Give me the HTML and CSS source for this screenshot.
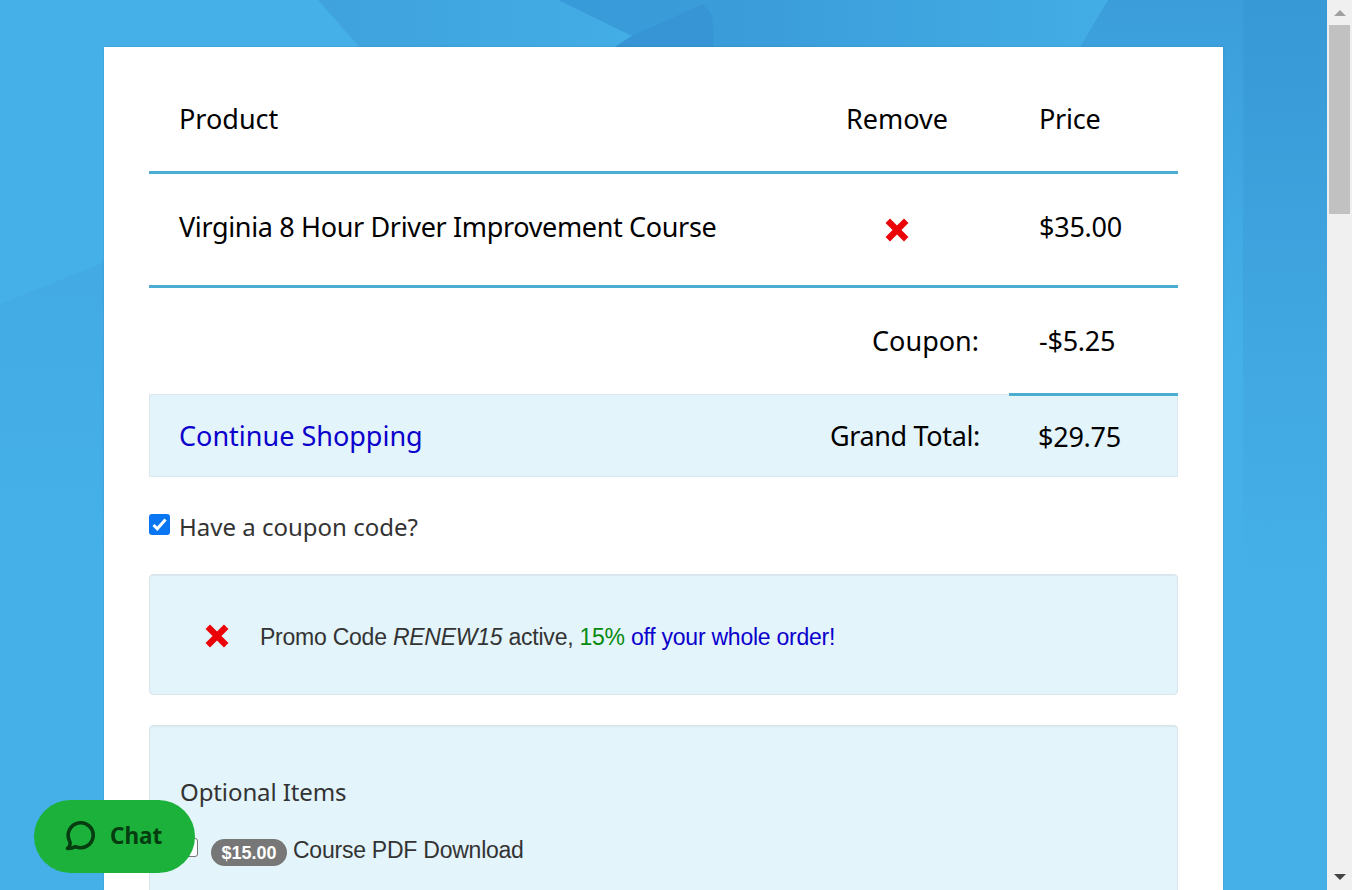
FILE: index.html
```html
<!DOCTYPE html>
<html lang="en">
<head>
    <meta charset="UTF-8">
    <meta name="viewport" content="width=device-width, initial-scale=1.0">
    <title>Shopping Cart</title>
    <link rel="stylesheet" href="styles.css">
</head>
<body>
    <!-- Background shapes -->
    <svg class="bg" viewBox="0 0 1327 890" preserveAspectRatio="none">
        <defs>
            <linearGradient id="facet" x1="0" y1="0" x2="0.4" y2="0">
                <stop offset="0" stop-color="#3fa2dd"/>
                <stop offset="1" stop-color="#43ade5"/>
            </linearGradient>
            <linearGradient id="facet-dark" x1="0" y1="0" x2="1" y2="0">
                <stop offset="0" stop-color="#389bd9"/>
                <stop offset="0.3" stop-color="#3a9cd9"/>
                <stop offset="1" stop-color="#43ade5"/>
            </linearGradient>
            <linearGradient id="side" x1="0" y1="0" x2="0" y2="1">
                <stop offset="0" stop-color="#3b9edb"/>
                <stop offset="1" stop-color="#45b0e8"/>
            </linearGradient>
            <linearGradient id="side-dark" x1="0" y1="0" x2="0" y2="1">
                <stop offset="0" stop-color="#3799d6"/>
                <stop offset="0.65" stop-color="#42a9e2"/>
                <stop offset="1" stop-color="#45b0e8"/>
            </linearGradient>
            <linearGradient id="left" x1="0" y1="0" x2="0" y2="1">
                <stop offset="0" stop-color="#43aae4"/>
                <stop offset="1" stop-color="#45b0e8"/>
            </linearGradient>
        </defs>
        <path fill="url(#facet)" d="M318 0H1110L1080 50H362z"/>
        <path fill="url(#facet-dark)" d="M558 0H1110L1080 50H610L632 36z"/>
        <path fill="#3795d5" d="M703 4L712 15L714 50H610L632 36z"/>
        <path fill="url(#side)" d="M1108 0H1243V370H1223V47H1080z"/>
        <path fill="url(#side-dark)" d="M1243 0H1327V600H1243z"/>
        <path fill="url(#left)" d="M0 304L104 262V560H0z"/>
    </svg>

    <main class="cart">
        <div class="row head">
            <div class="name">Product</div>
            <div class="remove">Remove</div>
            <div class="price">Price</div>
        </div>
        <div class="row item">
            <div class="name">Virginia 8 Hour Driver Improvement Course</div>
            <div class="remove">
                <svg class="x-icon" viewBox="0 0 24 24"><path d="M3.5 3.5L20.5 20.5M20.5 3.5L3.5 20.5"/></svg>
            </div>
            <div class="price">$35.00</div>
        </div>
        <div class="row coupon">
            <div class="label">Coupon:</div>
            <div class="price">-$5.25</div>
        </div>
        <div class="row total">
            <a class="continue" href="#">Continue Shopping</a>
            <div class="label">Grand Total:</div>
            <div class="price">$29.75</div>
        </div>

        <label class="have-coupon">
            <span class="check">
                <svg viewBox="0 0 21 21"><path d="M4.5 11L8.3 14.8L16.5 5.5"/></svg>
            </span>
            <span class="have-text">Have a coupon code?</span>
        </label>

        <section class="well promo">
            <svg class="x-icon" viewBox="0 0 24 24"><path d="M3.5 3.5L20.5 20.5M20.5 3.5L3.5 20.5"/></svg>
            <p>Promo Code <em>RENEW15</em> active, <span class="off">15%</span> <span class="order">off your whole order!</span></p>
        </section>

        <section class="well options">
            <h2>Optional Items</h2>
            <div class="option">
                <span class="box"></span>
                <span class="badge">$15.00</span>
                <span class="option-name">Course PDF Download</span>
            </div>
        </section>
    </main>

    <button class="chat" type="button">
        <svg viewBox="0 0 32 32"><path d="M3.5 28.5Q7.2 25.5 5.6 21A12.5 12.5 0 1 1 11.5 26.6Q8 28.6 3.5 28.5z"/></svg>
        <span>Chat</span>
    </button>

    <div class="scrollbar">
        <svg class="arrow up" viewBox="0 0 12 6"><path d="M0 6L6 0L12 6z"/></svg>
        <div class="thumb"></div>
        <svg class="arrow down" viewBox="0 0 12 6"><path d="M0 0L6 6L12 0z"/></svg>
    </div>
</body>
</html>
```
FILE: styles.css
```css
:root {
    --sky: #45b0e8;
    --line: #4badcf;
    --well: #e3f4fb;
    --link: #0b00cc;
    --danger: #ea0208;
    --myriad: 'Noto Sans', 'Open Sans', sans-serif;
    --arial: 'Liberation Sans', Arial, sans-serif;
}

* {
    box-sizing: border-box;
    margin: 0;
    padding: 0;
}

body {
    height: 890px;
    overflow: hidden;
    background: var(--sky);
    font-family: var(--myriad);
    color: #333;
}

.bg {
    position: absolute;
    top: 0;
    left: 0;
    width: 1327px;
    height: 890px;
}

.cart {
    position: relative;
    width: 1119px;
    height: 843px;
    margin: 47px 0 0 104px;
    padding: 22px 45px 0;
    background: #fff;
    overflow: hidden;
    box-shadow: 0 0 2px rgba(0, 0, 0, 0.15);
}

/* Cart table */
.row {
    display: flex;
    align-items: center;
    color: #000;
    font-size: 27px;
    line-height: 38px;
    white-space: nowrap;
}

.head {
    height: 105px;
    padding-bottom: 3px;
    border-bottom: 3px solid var(--line);
}

.item {
    height: 114px;
    padding-bottom: 6px;
    border-bottom: 3px solid var(--line);
}

.name {
    flex: 1;
    padding-left: 30px;
}

.item .name {
    letter-spacing: -0.35px;
}

.remove {
    width: 224px;
    display: flex;
    justify-content: center;
}

.remove .x-icon {
    margin-top: 6px;
}

.price {
    width: 169px;
    padding-left: 30px;
    letter-spacing: -0.25px;
}

.label {
    flex: 1;
    padding-right: 30px;
    text-align: right;
}

.coupon {
    position: relative;
    z-index: 1;
    height: 108px;
}

.coupon .label {
    padding-bottom: 2px;
}

.coupon .price {
    height: 108px;
    line-height: 106px;
    border-bottom: 3px solid var(--line);
}

.total {
    height: 83px;
    margin-top: -2px;
    background: var(--well);
    border: 1px solid #d9e9ef;
}

.total .label {
    padding-right: 28px;
    letter-spacing: -0.35px;
}

.total .price {
    padding: 2px 0 0 30px;
}

.continue {
    padding-left: 29px;
    color: var(--link);
    text-decoration: none;
}

.x-icon {
    width: 26px;
    height: 26px;
    fill: none;
    stroke: var(--danger);
    stroke-width: 5.8;
}

/* Coupon toggle */
.have-coupon {
    display: flex;
    align-items: center;
    gap: 9px;
    height: 36px;
    margin-top: 31px;
}

.check {
    width: 21px;
    height: 21px;
    margin-bottom: 4px;
    background: #0a76f2;
    border-radius: 3px;
}

.check svg {
    display: block;
    fill: none;
    stroke: #fff;
    stroke-width: 3;
}

.have-text {
    font-size: 24px;
}

/* Wells */
.well {
    background: var(--well);
    border: 1px solid #d6e6ec;
    border-radius: 4px;
    box-shadow: inset 0 1px 1px rgba(0, 0, 0, 0.05);
    white-space: nowrap;
}

.promo {
    display: flex;
    align-items: center;
    gap: 30px;
    height: 121px;
    margin-top: 30px;
    padding: 2px 0 0 54px;
}

.promo p {
    padding-top: 3px;
    font-family: var(--arial);
    font-size: 23px;
    letter-spacing: -0.24px;
}

.off {
    color: #078b0f;
}

.order {
    color: var(--link);
}

.options {
    height: 300px;
    margin-top: 30px;
    padding: 48px 30px;
}

.options h2 {
    font-size: 24px;
    font-weight: 400;
    line-height: 36px;
    letter-spacing: -0.1px;
}

.option {
    display: flex;
    align-items: center;
    margin-top: 24px;
    font-family: var(--arial);
    font-size: 23px;
    letter-spacing: -0.24px;
}

.box {
    width: 18px;
    height: 19px;
    margin-bottom: 6px;
    background: #fff;
    border: 1px solid #767676;
    border-radius: 3px;
}

.badge {
    width: 76px;
    height: 27px;
    margin: 5px 6px 0 13px;
    background: #777;
    border-radius: 14px;
    color: #fff;
    font-size: 18px;
    font-weight: 700;
    letter-spacing: 0;
    line-height: 28px;
    text-align: center;
}

/* Chat widget */
.chat {
    position: absolute;
    left: 34px;
    top: 800px;
    display: flex;
    align-items: center;
    gap: 14px;
    width: 161px;
    height: 73px;
    padding: 0 0 2px 30px;
    background: #1bb13b;
    border: 0;
    border-radius: 37px;
    color: #053c10;
    font-family: var(--myriad);
    font-size: 22.5px;
    font-weight: 700;
}

.chat svg {
    width: 32px;
    height: 32px;
    fill: none;
    stroke: #053c10;
    stroke-width: 3.6;
    stroke-linejoin: round;
}

/* Scrollbar */
.scrollbar {
    position: absolute;
    top: 0;
    right: 0;
    display: flex;
    flex-direction: column;
    align-items: center;
    width: 25px;
    height: 890px;
    background: #f0f0f0;
}

.arrow {
    width: 12px;
    height: 6px;
    fill: #a0a0a0;
}

.up {
    margin: 10px 0 9px;
}

.thumb {
    width: 21px;
    height: 189px;
    background: #c1c1c1;
}

.down {
    margin-top: auto;
    margin-bottom: 10px;
    fill: #444;
}
```
